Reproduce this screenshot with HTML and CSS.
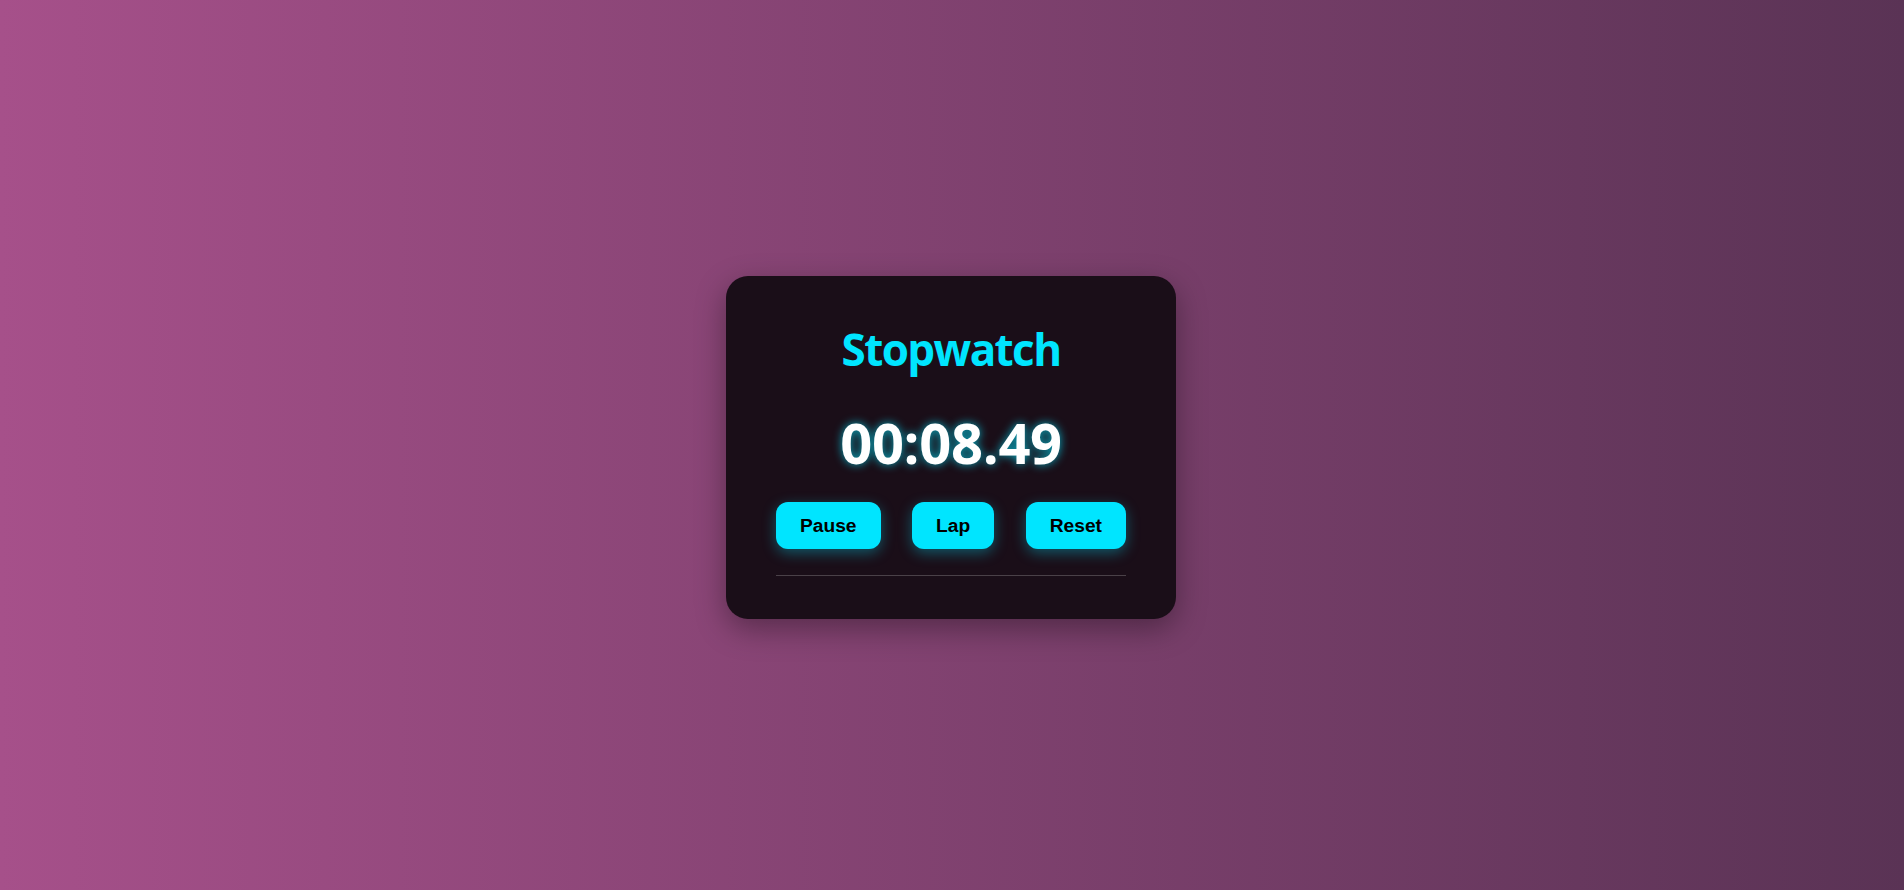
FILE: index.html
```html
<!DOCTYPE html>
<html lang="en">
<head>
<meta charset="utf-8">
<title>Stopwatch</title>
<link rel="stylesheet" href="styles.css">
</head>
<body>
  <main class="card">
    <h1 class="title">Stopwatch</h1>
    <div class="time">00:08.49</div>
    <div class="controls">
      <button class="btn">Pause</button>
      <button class="btn">Lap</button>
      <button class="btn">Reset</button>
    </div>
    <ul class="laps"></ul>
  </main>
</body>
</html>
```

FILE: styles.css
```css
* { box-sizing: border-box; }
html, body { height: 100%; }
body {
  margin: 0;
  padding: 5px 2px 0 0;
  min-height: 100vh;
  display: flex;
  align-items: center;
  justify-content: center;
  background: linear-gradient(to right, #a6508a, #5a3355);
  font-family: "Open Sans", "Noto Sans", sans-serif;
}
.card {
  width: 450px;
  background: #1a0e18;
  border-radius: 22px;
  padding: 43px 50px 43px;
  box-shadow: 0 10px 30px rgba(0, 0, 0, 0.35);
  display: flex;
  flex-direction: column;
  align-items: stretch;
}
.title {
  margin: 0;
  text-align: center;
  color: #00e5ff;
  font-size: 44px;
  font-weight: 700;
  line-height: 60px;
  letter-spacing: -1.6px;
}
.time {
  margin-top: 25px;
  text-align: center;
  color: #ffffff;
  font-size: 56px;
  font-weight: 700;
  line-height: 76px;
  letter-spacing: -0.3px;
  text-shadow: 0 0 10px rgba(0, 229, 255, 0.75);
}
.controls {
  margin-top: 22px;
  display: flex;
  justify-content: space-between;
}
.btn {
  border: none;
  background: #00e5ff;
  color: #000;
  font-family: "Liberation Sans", Arial, sans-serif;
  font-weight: 700;
  font-size: 19.2px;
  line-height: 23px;
  padding: 12px 24px;
  border-radius: 12px;
  box-shadow: 0 4px 14px rgba(0, 229, 255, 0.35);
  cursor: pointer;
}
.laps {
  list-style: none;
  margin: 26px 0 0;
  padding: 0;
  border-top: 1px solid #4a4148;
}
```
